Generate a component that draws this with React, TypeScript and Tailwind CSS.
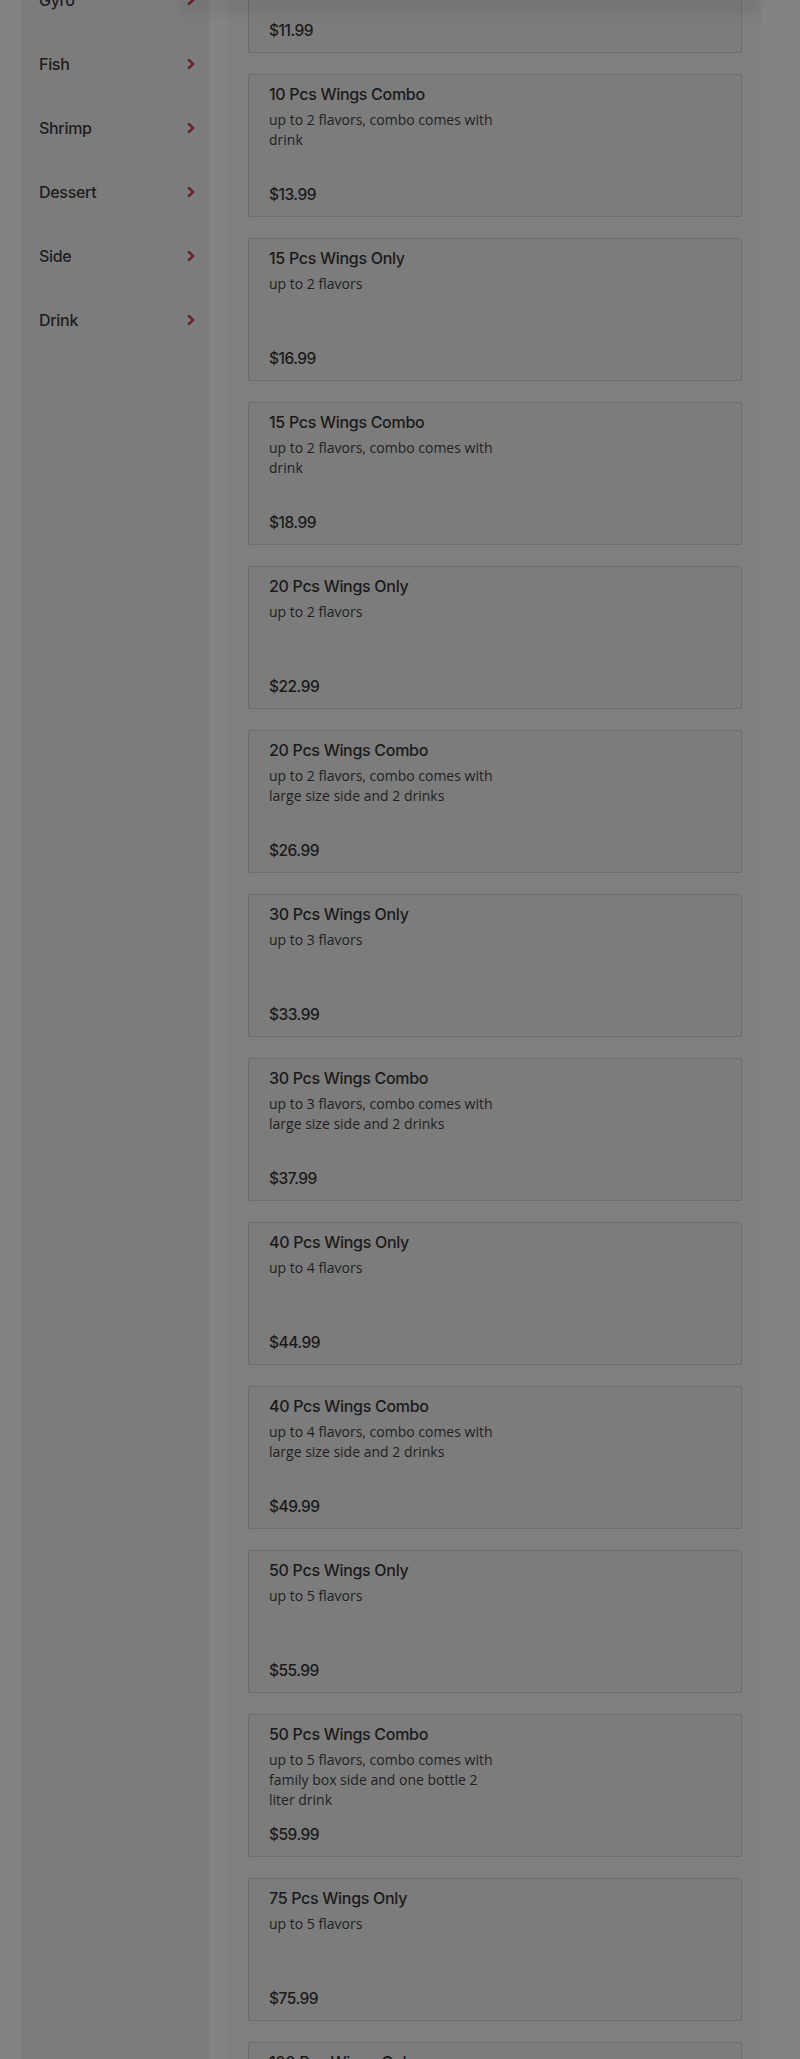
import React from "react";

type Item = { title: string; desc: string; price: string };

const cats = ["Wings", "Gyro", "Fish", "Shrimp", "Dessert", "Side", "Drink"];

const items: Item[] = [
  { title: "10 Pcs Wings Only", desc: "up to 2 flavors", price: "$11.99" },
  { title: "10 Pcs Wings Combo", desc: "up to 2 flavors, combo comes with drink", price: "$13.99" },
  { title: "15 Pcs Wings Only", desc: "up to 2 flavors", price: "$16.99" },
  { title: "15 Pcs Wings Combo", desc: "up to 2 flavors, combo comes with drink", price: "$18.99" },
  { title: "20 Pcs Wings Only", desc: "up to 2 flavors", price: "$22.99" },
  { title: "20 Pcs Wings Combo", desc: "up to 2 flavors, combo comes with large size side and 2 drinks", price: "$26.99" },
  { title: "30 Pcs Wings Only", desc: "up to 3 flavors", price: "$33.99" },
  { title: "30 Pcs Wings Combo", desc: "up to 3 flavors, combo comes with large size side and 2 drinks", price: "$37.99" },
  { title: "40 Pcs Wings Only", desc: "up to 4 flavors", price: "$44.99" },
  { title: "40 Pcs Wings Combo", desc: "up to 4 flavors, combo comes with large size side and 2 drinks", price: "$49.99" },
  { title: "50 Pcs Wings Only", desc: "up to 5 flavors", price: "$55.99" },
  { title: "50 Pcs Wings Combo", desc: "up to 5 flavors, combo comes with family box side and one bottle 2 liter drink", price: "$59.99" },
  { title: "75 Pcs Wings Only", desc: "up to 5 flavors", price: "$75.99" },
  { title: "100 Pcs Wings Only", desc: "up to 5 flavors", price: "$89.99" },
];

function Chevron() {
  return (
    <svg width="8" height="10" viewBox="0 0 8 10" className="shrink-0">
      <path d="M2 1.2 L6 5 L2 8.8" fill="none" stroke="#6e1f1f" strokeWidth="2.4" strokeLinecap="square" strokeLinejoin="miter" />
    </svg>
  );
}

export default function App() {
  return (
    <div className="relative h-[2059px] w-full overflow-hidden bg-[#838383]">
      <div className="-mt-[110px] flex items-start gap-[19px] pl-[21px]">
        <aside className="min-h-[2400px] w-[188px] shrink-0 bg-[#7c7c7c] pt-[14px]">
          {cats.map((c) => (
            <div
              key={c}
              className="flex h-16 items-center justify-between pl-[18px] pr-[14px] text-[16px] font-medium tracking-[-0.3px] text-[#1c1c1c] [font-family:Inter,'Liberation_Sans',sans-serif]"
            >
              <span>{c}</span>
              <Chevron />
            </div>
          ))}
        </aside>
        <main className="flex min-h-[2400px] w-[533px] shrink-0 flex-col gap-[21px] bg-[#7f7f7f] pl-5 pr-[19px] pt-5">
          {items.map((it) => (
            <div
              key={it.title}
              className="flex h-[143px] flex-col rounded-[2px] border border-[#6e6e6e] bg-[#7c7c7c] px-5 pb-[11px] pt-[9px]"
            >
              <div className="text-[16px] font-medium leading-5 tracking-[-0.3px] text-[#1a1a1a] [font-family:Inter,'Liberation_Sans',sans-serif]">
                {it.title}
              </div>
              <div className="mt-[6px] max-w-[230px] text-[14px] leading-5 text-[#1f1f1f] [font-family:'Open_Sans','Liberation_Sans',sans-serif]">
                {it.desc}
              </div>
              <div className="mt-auto text-[15.5px] font-medium leading-5 tracking-[-0.5px] text-[#1a1a1a] [font-family:Inter,'Liberation_Sans',sans-serif]">
                {it.price}
              </div>
            </div>
          ))}
        </main>
      </div>
      <div className="pointer-events-none absolute left-[180px] top-0 h-[22px] w-[580px] bg-gradient-to-b from-[rgba(0,0,0,0.08)] to-transparent blur-[3px]" />
    </div>
  );
}
